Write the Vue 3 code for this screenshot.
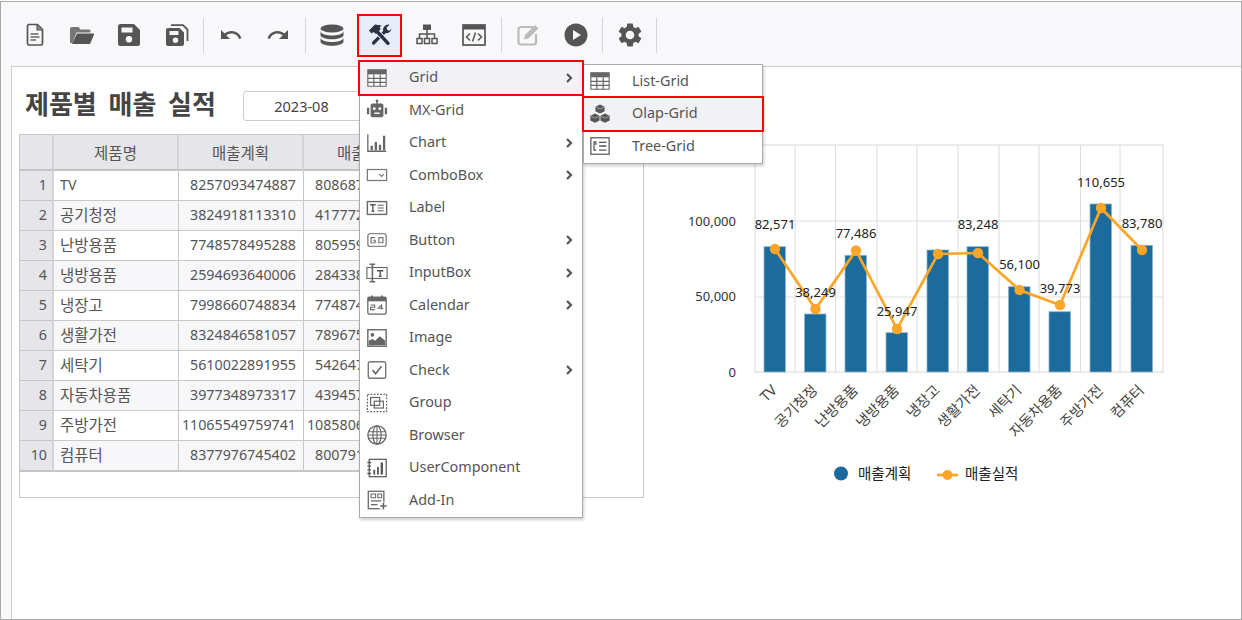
<script setup>
const ic = {
  doc: '<path d="M5.500 1.500h9l5 5v14a1.500 1.500 0 0 1-1.500 1.500H6a1.500 1.500 0 0 1-1.500-1.500V3A1.500 1.500 0 0 1 5.500 1.500z" fill="none" stroke="#555" stroke-width="1.700"/><path d="M14 2v5h5.500" fill="#888" stroke="#555" stroke-width="1.200"/><path d="M7.500 11h8M7.500 14h9M7.500 17h5.500" stroke="#666" stroke-width="1.500"/>',
  open: '<path d="M0 20V5.500A1.500 1.500 0 0 1 1.500 4h7l2 2.500h8.500A1.500 1.500 0 0 1 20.500 8v1.500H6.500L2.500 20z" fill="#777"/><path d="M2 21 7 10.500h17.500L20 21z" fill="#555"/>',
  save: '<path fill="#555" d="M17 1H3.500A2.500 2.500 0 0 0 1 3.500v17A2.500 2.500 0 0 0 3.500 23h17a2.500 2.500 0 0 0 2.500-2.500V7zM12 19.500a3.200 3.200 0 1 1 0-6.400 3.200 3.200 0 0 1 0 6.400zm3.500-10h-11V4.500h11z"/>',
  saveall: '<path fill="#555" d="M14.500 5H3a2 2 0 0 0-2 2v14a2 2 0 0 0 2 2h14a2 2 0 0 0 2-2V9.500zM10.500 20a2.700 2.700 0 1 1 0-5.400 2.700 2.700 0 0 1 0 5.400zm3-8H4.500V8h9z"/><path d="M6 2.200h12l4.500 4.500V18" fill="none" stroke="#555" stroke-width="1.800"/>',
  undo: '<path fill="#555" d="M12.500 8c-2.650 0-5.050.990-6.900 2.600L2 7v9h9l-3.620-3.620c1.390-1.160 3.160-1.880 5.120-1.880 3.540 0 6.550 2.310 7.600 5.500l2.370-.780C21.080 11.030 17.150 8 12.500 8z"/>',
  redo: '<path fill="#555" d="M18.400 10.600C16.550 8.990 14.150 8 11.500 8c-4.650 0-8.580 3.030-9.960 7.220L3.900 16c1.050-3.190 4.050-5.500 7.600-5.500 1.950 0 3.730.720 5.120 1.880L13 16h9V7l-3.600 3.600z"/>',
  db: '<ellipse cx="12" cy="5.500" rx="11.500" ry="4" fill="#555"/><path fill="#555" d="M.5 8.500c1 2.600 6 4 11.500 4s10.500-1.400 11.500-4V12c0 2.500-5.500 4.300-11.500 4.300S.5 14.500.5 12zM.5 15c1 2.600 6 4 11.500 4s10.500-1.400 11.500-4v3.500c0 2.500-5.500 4.300-11.500 4.300S.5 21 .5 18.500z"/>',
  tools: '<path d="M5.500 20 16 9.500" stroke="#2b3245" stroke-width="3.200" stroke-linecap="round"/><path d="M15.300 8.500A5.200 5.200 0 0 1 21.500 1.800l-3 3 .8 2.200 2.200.7 2-2.200A5.200 5.200 0 0 1 17 10z" fill="#2b3245"/><path d="M10 9.500l10 10.800" stroke="#e8ecfb" stroke-width="5.400"/><path d="M10 9.500l10 10.800" stroke="#2b3245" stroke-width="3.400" stroke-linecap="round"/><path d="M1 7.500 7 1.500l6.500 1-1.800 2 1 1.500-4.700 5L5.500 9 3.500 10.500z" fill="#2b3245"/>',
  site: '<path d="M8 1.500h8v5.500H8z" fill="#555"/><path d="M12 7v4M4.500 15v-4h15v4" fill="none" stroke="#555" stroke-width="1.500"/><path d="M12 11v4" stroke="#555" stroke-width="1.500"/><path d="M2 15.500h5v5H2zM9.500 15.500h5v5h-5zM17 15.500h5v5h-5z" fill="none" stroke="#555" stroke-width="1.500"/>',
  code: '<rect x="1" y="2" width="22" height="20" fill="none" stroke="#555" stroke-width="1.700"/><path d="M1 2h22v4.500H1z" fill="#555"/><path d="M8 10.500 4.500 14 8 17.500M16 10.500l3.500 3.500-3.500 3.500M13.500 9.500l-3 9" fill="none" stroke="#555" stroke-width="1.500"/>',
  edit: '<path d="M17 4H5a2.500 2.500 0 0 0-2.500 2.500V19A2.500 2.500 0 0 0 5 21.500h12.500A2.500 2.500 0 0 0 20 19v-8" fill="none" stroke="#bbb" stroke-width="2.200"/><path d="M9 12 19 2l3.500 3.500-10 10L8 16.500z" fill="#bbb"/>',
  play: '<path fill="#555" d="M12 .5C5.650.5.5 5.650.5 12S5.650 23.500 12 23.500 23.500 18.350 23.500 12 18.350.5 12 .5zM9 17V7l8 5z"/>',
  gear: '<path fill="#555" d="M19.140 12.940c.040-.300.060-.610.060-.940 0-.320-.020-.640-.070-.940l2.030-1.580c.180-.140.230-.410.120-.610l-1.920-3.320c-.120-.220-.370-.290-.590-.220l-2.390.960c-.500-.380-1.030-.700-1.620-.940l-.360-2.540c-.040-.240-.240-.410-.480-.410h-3.840c-.240 0-.430.170-.470.410l-.360 2.540c-.590.240-1.130.570-1.620.940l-2.390-.960c-.220-.080-.470 0-.590.220L2.740 8.870c-.120.210-.080.470.120.610l2.030 1.580c-.050.300-.090.630-.090.940s.020.640.07.940l-2.030 1.580c-.180.140-.230.410-.12.610l1.920 3.320c.120.220.370.290.590.220l2.390-.960c.500.380 1.030.700 1.620.940l.360 2.540c.050.240.240.410.480.410h3.840c.240 0 .440-.170.470-.410l.360-2.540c.590-.240 1.130-.560 1.620-.940l2.390.960c.220.080.470 0 .590-.220l1.920-3.320c.120-.220.070-.470-.12-.610l-2.010-1.580zM12 15.600c-1.980 0-3.600-1.620-3.600-3.600s1.620-3.600 3.600-3.600 3.600 1.620 3.600 3.600-1.620 3.600-3.600 3.600z" transform="translate(-2.400 -2.400) scale(1.200)"/>',
  grid: '<path d="M2 3h20v18H2z" fill="#fff" stroke="#666" stroke-width="1.200"/><path d="M2 3h20v5H2z" fill="#666"/><path d="M2 12.500h20M2 16.800h20M8.500 8v13M15.500 8v13" stroke="#666" stroke-width="1.300"/>',
  bot: '<path d="M12 1.500v4" stroke="#666" stroke-width="1.500"/><circle cx="12" cy="2" r="1.500" fill="#666"/><rect x="5" y="5" width="14" height="15" rx="2" fill="#666"/><path d="M1 9.500h2.500v7H1zM20.500 9.500H23v7h-2.500z" fill="#666"/><circle cx="9" cy="10.500" r="1.500" fill="#fff"/><circle cx="15" cy="10.500" r="1.500" fill="#fff"/><path d="M9 15.500h6" stroke="#fff" stroke-width="1.500"/>',
  chart: '<path d="M2 2.500V21h20" fill="none" stroke="#666" stroke-width="1.400"/><path d="M5 15h2.500v5H5zM9.500 11H12v9H9.500zM14 14h2.500v6H14zM18.500 4H21v16h-2.500z" fill="#666"/>',
  combo: '<rect x="1.500" y="6" width="21" height="12" fill="#fff" stroke="#777" stroke-width="1.300"/><path d="M14.500 11l2.500 2.500 2.500-2.500" fill="none" stroke="#777" stroke-width="1.300"/>',
  label: '<rect x="1.500" y="5" width="21" height="14" fill="#fff" stroke="#666" stroke-width="1.500"/><path d="M4.500 8.500h6M7.500 8.500v7M6 15.500h3" fill="none" stroke="#555" stroke-width="1.500"/><path d="M12.500 9h7M12.500 12h7M12.500 15h7" stroke="#666" stroke-width="1.200"/>',
  btn: '<rect x="2" y="5" width="20" height="14" rx="2.500" fill="#fff" stroke="#888" stroke-width="1.500"/><path d="M10 9.500H5.500V15H10v-2.500H8M14 9.500h4.500V15H14z" fill="none" stroke="#777" stroke-width="1.300"/>',
  input: '<rect x="1" y="6" width="22" height="12" fill="#fff" stroke="#666" stroke-width="1.200"/><path d="M4 2.500h6M7 2.500v19M4 21.500h6" fill="none" stroke="#666" stroke-width="1.700"/><path d="M12 9.500h7M15.500 9.500v6M14 15.500h3" fill="none" stroke="#555" stroke-width="1.500"/>',
  cal: '<rect x="2" y="3.500" width="20" height="18.500" rx="1.500" fill="#fff" stroke="#666" stroke-width="1.400"/><path d="M2 3.500h20V8H2z" fill="#666"/><path d="M6.500 1.500v3M17.500 1.500v3" stroke="#666" stroke-width="1.800"/><path d="M5 12h4.500v2.500H5V17h4.500M17 17v-5l-3.500 3.500H19" fill="none" stroke="#666" stroke-width="1.200"/>',
  img: '<rect x="2" y="3" width="20" height="18" fill="#fff" stroke="#666" stroke-width="1.500"/><circle cx="7" cy="8.500" r="2" fill="#666"/><path d="M3 20v-5l4-2 3 2 5-5 6 5v5z" fill="#666"/>',
  check: '<rect x="2.500" y="3" width="19" height="18" rx="2" fill="#fff" stroke="#777" stroke-width="1.500"/><path d="M7 12l3.500 4 6.500-8" fill="none" stroke="#666" stroke-width="1.800"/>',
  group: '<rect x="1.500" y="2.500" width="21" height="19" fill="none" stroke="#666" stroke-width="1.300" stroke-dasharray="2 1.500"/><rect x="5" y="6" width="10" height="8.500" fill="none" stroke="#666" stroke-width="1.300"/><rect x="9" y="10" width="10" height="7.500" fill="none" stroke="#666" stroke-width="1.300"/>',
  globe: '<circle cx="12" cy="12" r="10" fill="none" stroke="#666" stroke-width="1.400"/><ellipse cx="12" cy="12" rx="4.500" ry="10" fill="none" stroke="#666" stroke-width="1.300"/><path d="M2.500 8.500h19M2 12h20M2.500 15.500h19M12 2v20" stroke="#666" stroke-width="1.200"/>',
  user: '<rect x="3.500" y="2.500" width="18.500" height="19" fill="none" stroke="#555" stroke-width="1.300"/><path d="M1.500 6h4M1.500 10h4M1.500 14h4M1.500 18h4" stroke="#555" stroke-width="1.500"/><path d="M8 14h2v5H8zM12 11h2v8h-2zM16 6h2.500v13H16z" fill="#555"/>',
  addin: '<rect x="2.500" y="2.500" width="17" height="19" fill="#fff" stroke="#666" stroke-width="1.400"/><path d="M5.500 5.500h5v4h-5zM13 5.500h4v4h-4z" fill="none" stroke="#666" stroke-width="1.200"/><path d="M5.500 13h11M5.500 17h7" stroke="#666" stroke-width="1.400"/><path d="M15 14.500h8v8h-8z" fill="#fff"/><path d="M19 15v7M15.500 18.500h7" stroke="#666" stroke-width="1.700" fill="none"/>',
  olap: '<path d="M12 1.500l5 2.500v5l-5 2.500-5-2.500V4z" fill="#555"/><path d="M6.500 11.500l5 2.500v5l-5 2.500-5-2.500v-5zM17.500 11.500l5 2.500v5l-5 2.500-5-2.500v-5z" fill="#555"/><path d="M7.500 4.500 12 6.500l4.500-2M2 14.500l4.500 2 4.500-2M13 14.500l4.500 2 4.500-2" fill="none" stroke="#bbb" stroke-width=".8"/>',
  tree: '<rect x="2" y="3" width="20" height="18" fill="#fff" stroke="#666" stroke-width="1.500"/><path d="M5 7.500h2.500V11M5.500 8v8.500M5 16.500h3M11 8h8M11 12h8M11 16.500h8" fill="none" stroke="#555" stroke-width="1.400"/>'
}

const toolbar = ['doc', 'open', 'save', 'saveall', '|', 'undo', 'redo', '|', 'db', 'tools', 'site', 'code', '|', 'edit', 'play', '|', 'gear', '|']
  .map((name, id) => ({ id, name }))

const menu = [
  { icon: 'grid', label: 'Grid', sub: true, hot: true },
  { icon: 'bot', label: 'MX-Grid' },
  { icon: 'chart', label: 'Chart', sub: true },
  { icon: 'combo', label: 'ComboBox', sub: true },
  { icon: 'label', label: 'Label' },
  { icon: 'btn', label: 'Button', sub: true },
  { icon: 'input', label: 'InputBox', sub: true },
  { icon: 'cal', label: 'Calendar', sub: true },
  { icon: 'img', label: 'Image' },
  { icon: 'check', label: 'Check', sub: true },
  { icon: 'group', label: 'Group' },
  { icon: 'globe', label: 'Browser' },
  { icon: 'user', label: 'UserComponent' },
  { icon: 'addin', label: 'Add-In' }
]
const submenu = [
  { icon: 'grid', label: 'List-Grid' },
  { icon: 'olap', label: 'Olap-Grid', hot: true },
  { icon: 'tree', label: 'Tree-Grid' }
]

const rows = [
  ['TV', '8257093474887', '8086871234567'],
  ['공기청정', '3824918113310', '4177721234567'],
  ['난방용품', '7748578495288', '8059591234567'],
  ['냉방용품', '2594693640006', '2843381234567'],
  ['냉장고', '7998660748834', '7748741234567'],
  ['생활가전', '8324846581057', '7896751234567'],
  ['세탁기', '5610022891955', '5426471234567'],
  ['자동차용품', '3977348973317', '4394571234567'],
  ['주방가전', '11065549759741', '10858061234567'],
  ['컴퓨터', '8377976745402', '8007911234567']
]

const grid = [795, 835.5, 877, 917, 958, 999, 1039, 1080.5, 1120]
const series = [
  { name: 'TV', x: 775, bar: 246.7, dot: 249, v: '82,571', ly: 229 },
  { name: '공기청정', x: 815.5, bar: 314, dot: 309, v: '38,249', ly: 297 },
  { name: '난방용품', x: 856, bar: 255.3, dot: 250.5, v: '77,486', ly: 238 },
  { name: '냉방용품', x: 897, bar: 332.7, dot: 329, v: '25,947', ly: 316 },
  { name: '냉장고', x: 938, bar: 250, dot: 254, v: '', ly: 0 },
  { name: '생활가전', x: 978, bar: 246.7, dot: 253, v: '83,248', ly: 229 },
  { name: '세탁기', x: 1019.5, bar: 286.7, dot: 290, v: '56,100', ly: 269 },
  { name: '자동차용품', x: 1060, bar: 311.7, dot: 305, v: '39,773', ly: 293 },
  { name: '주방가전', x: 1101, bar: 204, dot: 208, v: '110,655', ly: 187 },
  { name: '컴퓨터', x: 1142, bar: 245.3, dot: 250, v: '83,780', ly: 228 }
]
const linePoints = series.map(s => `${s.x},${s.dot}`).join(' ')
</script>

<template>
  <div class="page">
    <div class="toolbar">
      <template v-for="t in toolbar" :key="t.id">
        <span v-if="t.name === '|'" class="sep"></span>
        <span v-else class="tool" :class="{ active: t.name === 'tools' }">
          <svg class="tool-icon" viewBox="0 0 24 24" v-html="ic[t.name]"></svg>
        </span>
      </template>
    </div>

    <div class="canvas">
      <section class="left">
        <div class="head">
          <h1>제품별 매출 실적</h1>
          <div class="date">2023-08</div>
        </div>
        <div class="grid-box">
          <table>
            <colgroup>
              <col class="c0"><col class="c1"><col class="c1"><col class="c1">
            </colgroup>
            <thead>
              <tr><th></th><th>제품명</th><th>매출계획</th><th>매출실적</th></tr>
            </thead>
            <tbody>
              <tr v-for="(r, i) in rows" :key="r[0]">
                <td class="num"><span>{{ i + 1 }}</span></td>
                <td class="name" :class="{ latin: r[0] === 'TV' }"><span>{{ r[0] }}</span></td>
                <td class="val"><span>{{ r[1] }}</span></td>
                <td class="val"><span>{{ r[2] }}</span></td>
              </tr>
            </tbody>
          </table>
        </div>
      </section>

      <svg class="chart" viewBox="680 130 540 370">
        <rect x="755" y="145" width="408" height="227" fill="none" stroke="#e0e0e0" stroke-width="1.300"/>
        <line v-for="g in grid" :key="g" :x1="g" :x2="g" y1="145" y2="372" stroke="#dcdcdc"/>
        <line x1="755" x2="1163" y1="221" y2="221" stroke="#e0e0e0"/>
        <line x1="755" x2="1163" y1="297" y2="297" stroke="#e0e0e0"/>
        <g class="axis" text-anchor="end">
          <text x="736" y="226">100,000</text>
          <text x="736" y="301">50,000</text>
          <text x="736" y="377">0</text>
        </g>
        <rect v-for="s in series" :key="s.name" :x="s.x - 11" :y="s.bar" width="21.500" :height="372 - s.bar" fill="#1b6b9c" stroke="#8db4cc" stroke-width=".8"/>
        <polyline :points="linePoints" fill="none" stroke="#fba629" stroke-width="2.700"/>
        <circle v-for="s in series" :key="s.name" :cx="s.x" :cy="s.dot" r="5.200" fill="#fba629"/>
        <g class="vals" text-anchor="middle">
          <text v-for="s in series" :key="s.name" :x="s.x" :y="s.ly">{{ s.v }}</text>
        </g>
        <g class="cats" text-anchor="end">
          <text v-for="s in series" :key="s.name" :transform="`translate(${s.x + 3} 391) rotate(-45)`">{{ s.name }}</text>
        </g>
        <circle cx="841" cy="473.500" r="7" fill="#1b6b9c"/>
        <text class="legend" x="858" y="479">매출계획</text>
        <line x1="937" x2="958" y1="475" y2="475" stroke="#fba629" stroke-width="2.700"/>
        <circle cx="947.500" cy="475" r="5" fill="#fba629"/>
        <text class="legend" x="965" y="479">매출실적</text>
      </svg>
    </div>

    <ul class="menu main">
      <li v-for="m in menu" :key="m.label" :class="{ hot: m.hot }">
        <svg class="m-icon" viewBox="0 0 24 24" v-html="ic[m.icon]"></svg>
        <span class="m-label">{{ m.label }}</span>
        <svg v-if="m.sub" class="chev" viewBox="0 0 8 10"><path d="M2 1l4 4-4 4" fill="none" stroke="#555" stroke-width="2.200"/></svg>
      </li>
    </ul>
    <ul class="menu sub">
      <li v-for="m in submenu" :key="m.label" :class="{ hot: m.hot }">
        <svg class="m-icon" viewBox="0 0 24 24" v-html="ic[m.icon]"></svg>
        <span class="m-label">{{ m.label }}</span>
      </li>
    </ul>
  </div>
</template>

<style>
html, body { margin: 0; background: #fff; }
</style>

<style scoped>
.page {
  position: relative;
  width: 1242px;
  height: 619px;
  margin-top: 1px;
  box-sizing: border-box;
  overflow: hidden;
  display: flex;
  flex-direction: column;
  padding-left: 10px;
  background: #f8f8fb;
  border: 1px solid #aaa;
  font-family: "Noto Sans", "Noto Sans CJK KR", sans-serif;
  color: #555;
}
.toolbar {
  display: flex;
  align-items: center;
  height: 64px;
  margin-left: -10px;
  padding-left: 10px;
  padding-top: 2px;
  box-sizing: border-box;
  flex: none;
}
.tool {
  width: 47.400px;
  height: 43px;
  display: flex;
  align-items: center;
  justify-content: center;
  box-sizing: border-box;
}
.tool.active {
  background: #e8ecfb;
  outline: 2px solid #f00;
  outline-offset: -2px;
  width: 45px;
  margin: 0 1.200px;
}
.tool-icon { width: 24px; height: 24px; }
.sep {
  width: 6.600px;
  height: 35px;
  flex: none;
  background: linear-gradient(#d6d6d9, #d6d6d9) center / 1px 100% no-repeat;
}
.canvas {
  flex: 1;
  display: flex;
  background: #fff;
  border-top: 1px solid #ccc;
  border-left: 1px solid #ccc;
}
.left {
  width: 625px;
  margin-left: 7px;
  flex: none;
}
.head {
  display: flex;
  align-items: center;
  height: 67px;
  box-sizing: border-box;
  padding-top: 4px;
}
h1 {
  margin: 0 27px 0 6px;
  font-size: 26px;
  font-weight: 700;
  word-spacing: 5px;
  color: #444;
  white-space: nowrap;
}
.date {
  width: 139px;
  height: 30px;
  margin-top: 6px;
  box-sizing: border-box;
  border: 1px solid #ccc;
  border-radius: 3px;
  font-size: 14.500px;
  line-height: 28px;
  text-align: center;
  padding-right: 22px;
  color: #444;
}
.grid-box {
  height: 364px;
  box-sizing: border-box;
  border: 1px solid #c8c8c8;
}
table {
  border-collapse: separate;
  border-spacing: 0;
  table-layout: fixed;
  width: 409px;
  font-size: 14.250px;
}
.c0 { width: 34px; }
.c1 { width: 125px; }
th {
  height: 34px;
  padding: 0;
  background: #e6e6ea;
  font-weight: 400;
  font-size: 15.500px;
  color: #555;
  border-right: 2px solid #d4d4d8;
  border-bottom: 2px solid #c4c4c4;
  box-sizing: content-box;
}
td {
  height: 29px;
  padding: 0 7px 0 2px;
  box-sizing: content-box;
  border-right: 1px solid #c8c8c8;
  border-bottom: 1px solid #c8c8c8;
  white-space: nowrap;
  overflow: hidden;
}
td span { position: relative; top: -1px; }
td.name { font-size: 15.500px; padding-left: 6px; }
td.name.latin { font-size: 14.250px; }
tbody tr:nth-child(even) td { background: #f7f7fa; }
tbody tr:last-child td { border-bottom: 2px solid #c4c4c4; }
td.num {
  background: #e6e6ea !important;
  text-align: right;
  padding: 0 5px 0 0;
  border-right: 2px solid #d4d4d8;
  color: #555;
}
td.val { text-align: right; }
.chart {
  width: 540px;
  height: 370px;
  flex: none;
  margin: 63px 0 0 36px;
}
.chart text { font-size: 13px; fill: #222; }
.chart .axis text { font-size: 13px; fill: #333; }
.chart .cats text { font-size: 14.500px; fill: #444; }
.chart .legend { font-size: 14.500px; }
.menu {
  position: absolute;
  list-style: none;
  margin: 0;
  padding: 0;
  background: #fff;
  border: 1px solid #aaa;
  box-shadow: 1px 2px 3px rgba(0, 0, 0, .2);
  font-size: 14.400px;
}
.menu.main { left: 358px; top: 58.500px; width: 222px; }
.menu.sub { left: 582px; top: 62px; width: 178px; }
.menu li {
  position: relative;
  height: 32.500px;
  display: flex;
  align-items: center;
  padding-left: 6px;
}
.menu.sub li { padding-left: 5px; }
.menu li.hot {
  background: #f1f1f6;
  outline: 2px solid #f00;
  outline-offset: 0;
  z-index: 1;
}
.m-icon { width: 22px; height: 22px; flex: none; }
.m-label { margin-left: 21px; margin-bottom: 2px; white-space: nowrap; }
.chev {
  position: absolute;
  right: 9px;
  width: 8px;
  height: 10px;
}
</style>
